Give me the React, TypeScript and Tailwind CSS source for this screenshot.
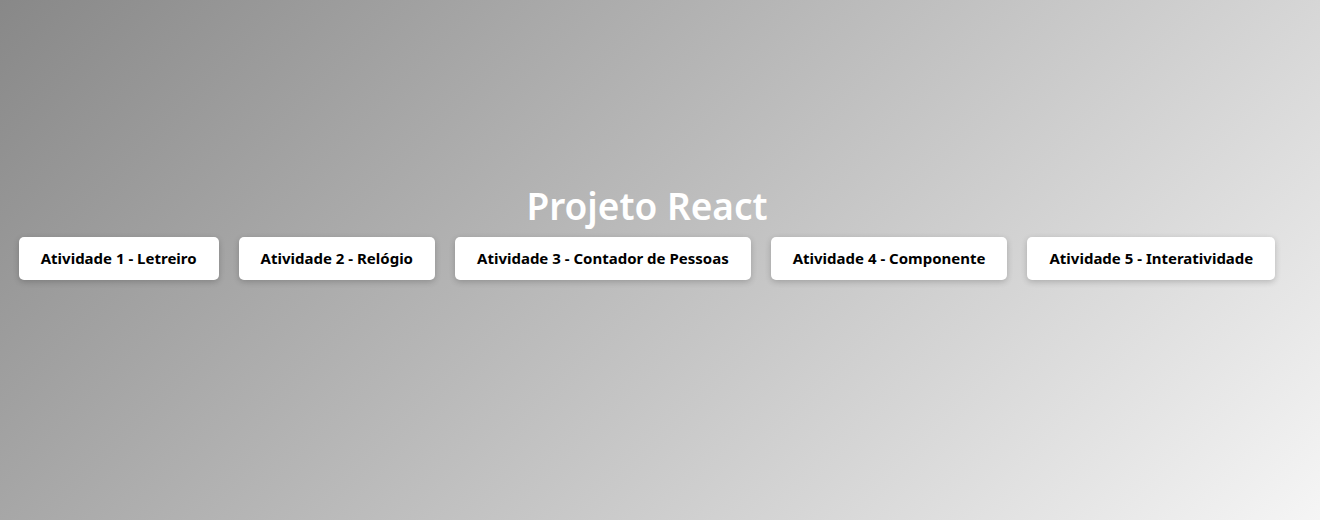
const atividades = [
  'Atividade 1 - Letreiro',
  'Atividade 2 - Relógio',
  'Atividade 3 - Contador de Pessoas',
  'Atividade 4 - Componente',
  'Atividade 5 - Interatividade',
];

export default function App() {
  return (
    <div
      className="h-[520px] w-full flex flex-col items-center justify-center pb-[56px] pr-[26px] bg-[linear-gradient(135deg,#888888,#f5f5f5)]"
      style={{ fontFamily: '"Noto Sans", "Open Sans", sans-serif' }}
    >
      <h1 className="text-[37px] leading-[44px] font-semibold text-white mb-[9px]">Projeto React</h1>
      <div className="flex gap-5">
        {atividades.map((a) => (
          <button
            key={a}
            className="h-[43px] px-[22px] bg-white rounded-[5px] text-[15px] font-bold text-black shadow-[0_2px_6px_rgba(0,0,0,0.2)]"
          >
            {a}
          </button>
        ))}
      </div>
    </div>
  );
}
